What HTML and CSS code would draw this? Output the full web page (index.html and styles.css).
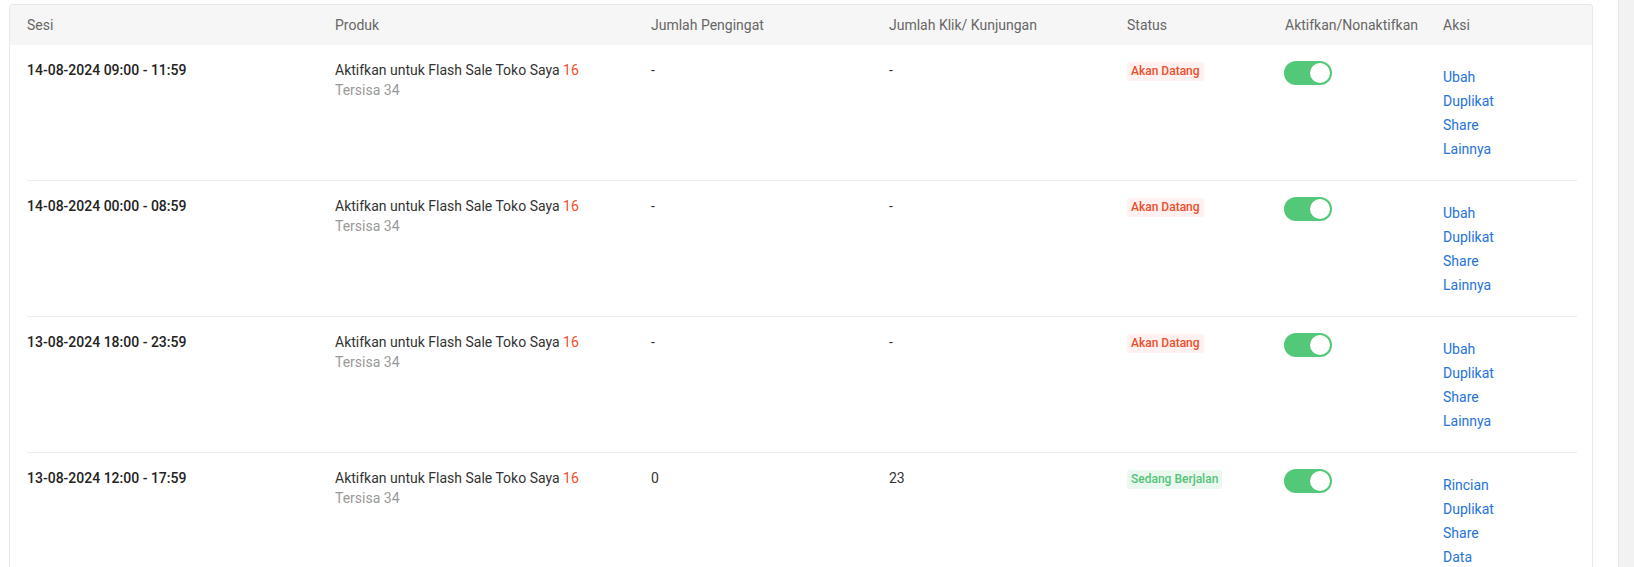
FILE: index.html
```html
<!DOCTYPE html>
<html lang="id">
<head>
<meta charset="utf-8">
<title>Flash Sale Toko Saya</title>
<link rel="stylesheet" href="styles.css">
</head>
<body>
<div class="page">
  <main class="main">
    <div class="table">
      <div class="thead">
        <div class="th">Sesi</div>
        <div class="th">Produk</div>
        <div class="th">Jumlah Pengingat</div>
        <div class="th">Jumlah Klik/ Kunjungan</div>
        <div class="th">Status</div>
        <div class="th">Aktifkan/Nonaktifkan</div>
        <div class="th">Aksi</div>
      </div>
      <div class="tbody">
        <div class="row">
          <div class="cell date">14-08-2024 09:00 - 11:59</div>
          <div class="cell"><div>Aktifkan untuk Flash Sale Toko Saya <span class="red">16</span></div><div class="muted">Tersisa 34</div></div>
          <div class="cell">-</div>
          <div class="cell">-</div>
          <div class="cell"><span class="badge upcoming">Akan Datang</span></div>
          <div class="cell"><span class="toggle"><span class="knob"></span></span></div>
          <div class="cell actions"><a>Ubah</a><a>Duplikat</a><a>Share</a><a>Lainnya</a></div>
        </div>
        <div class="row">
          <div class="cell date">14-08-2024 00:00 - 08:59</div>
          <div class="cell"><div>Aktifkan untuk Flash Sale Toko Saya <span class="red">16</span></div><div class="muted">Tersisa 34</div></div>
          <div class="cell">-</div>
          <div class="cell">-</div>
          <div class="cell"><span class="badge upcoming">Akan Datang</span></div>
          <div class="cell"><span class="toggle"><span class="knob"></span></span></div>
          <div class="cell actions"><a>Ubah</a><a>Duplikat</a><a>Share</a><a>Lainnya</a></div>
        </div>
        <div class="row">
          <div class="cell date">13-08-2024 18:00 - 23:59</div>
          <div class="cell"><div>Aktifkan untuk Flash Sale Toko Saya <span class="red">16</span></div><div class="muted">Tersisa 34</div></div>
          <div class="cell">-</div>
          <div class="cell">-</div>
          <div class="cell"><span class="badge upcoming">Akan Datang</span></div>
          <div class="cell"><span class="toggle"><span class="knob"></span></span></div>
          <div class="cell actions"><a>Ubah</a><a>Duplikat</a><a>Share</a><a>Lainnya</a></div>
        </div>
        <div class="row">
          <div class="cell date">13-08-2024 12:00 - 17:59</div>
          <div class="cell"><div>Aktifkan untuk Flash Sale Toko Saya <span class="red">16</span></div><div class="muted">Tersisa 34</div></div>
          <div class="cell">0</div>
          <div class="cell">23</div>
          <div class="cell"><span class="badge ongoing">Sedang Berjalan</span></div>
          <div class="cell"><span class="toggle"><span class="knob"></span></span></div>
          <div class="cell actions"><a>Rincian</a><a>Duplikat</a><a>Share</a><a>Data</a></div>
        </div>
      </div>
    </div>
  </main>
  <aside class="scroll-strip"></aside>
</div>
</body>
</html>
```

FILE: styles.css
```css
* { box-sizing: border-box; }
html, body {
  margin: 0;
  padding: 0;
  background: #fff;
  height: 567px;
  overflow: hidden;
}
body {
  font-family: Roboto, "Liberation Sans", Arial, sans-serif;
  font-size: 14px;
  line-height: 20px;
  color: #333;
}
.page {
  display: flex;
  height: 567px;
}
.main {
  flex: 1;
  padding: 4px 0 0 9px;
}
.table {
  width: 1584px;
  border: 1px solid #e8e8e8;
  border-bottom: none;
  border-radius: 4px 4px 0 0;
  overflow: hidden;
}
.thead {
  display: grid;
  grid-template-columns: 308px 316px 238px 238px 158px 158px 1fr;
  height: 40px;
  align-items: center;
  background: #f6f6f6;
  padding: 0 15px 0 17px;
  color: #666;
}
.tbody {
  padding: 0 15px 0 17px;
}
.row {
  display: grid;
  grid-template-columns: 308px 316px 238px 238px 158px 158px 1fr;
  padding: 15px 0 19px;
  border-bottom: 1px solid #ececec;
  align-items: start;
}
.cell { color: #333; }
.date {
  font-weight: 500;
  color: #222;
}
.red { color: #ee4d2d; }
.muted { color: #999; }
.badge {
  display: inline-block;
  font-size: 12px;
  font-weight: 500;
  line-height: 19px;
  height: 19px;
  padding: 0 4px;
  border-radius: 2px;
  margin-top: 0;
}
.upcoming {
  color: #ee4d2d;
  background: #fff1ef;
}
.ongoing {
  color: #55c47a;
  background: #eaf8ef;
}
.toggle {
  display: flex;
  justify-content: flex-end;
  align-items: center;
  width: 48px;
  height: 24px;
  border-radius: 12px;
  background: #52c878;
  padding: 2px;
  margin: 1px 0 0 -1px;
}
.knob {
  width: 20px;
  height: 20px;
  border-radius: 50%;
  background: #fff;
}
.actions {
  display: flex;
  flex-direction: column;
  margin-top: 5px;
  line-height: 24px;
}
.actions a {
  color: #2673dd;
  cursor: pointer;
}
.scroll-strip {
  width: 16px;
  flex: none;
  background: #f2f2f2;
  border-left: 1px solid #e8e8e8;
}
```
